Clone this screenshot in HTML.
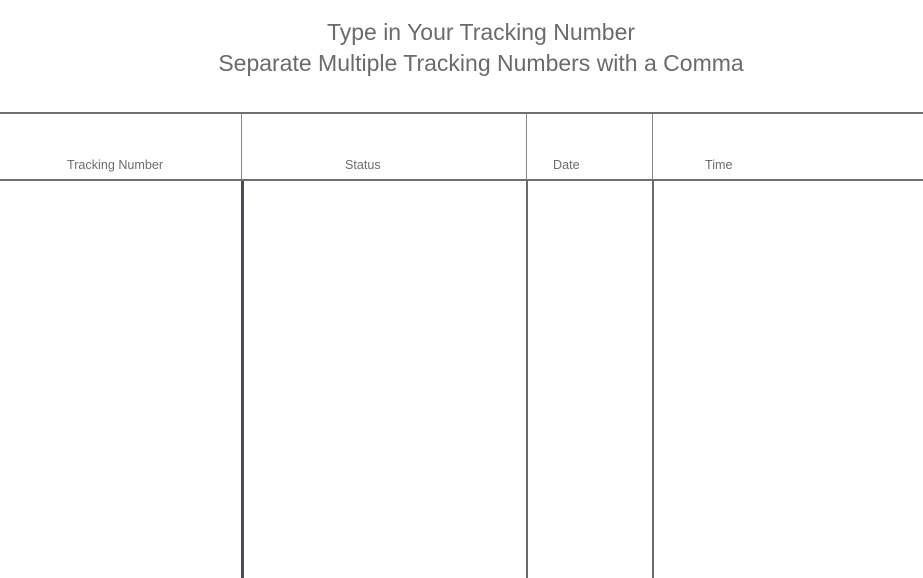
<!DOCTYPE html>
<html><head><style>
body{margin:0;width:923px;height:578px;background:#fff;position:relative;overflow:hidden;font-family:"Liberation Sans",sans-serif;color:#666}
.t{position:absolute;left:0;width:962px;text-align:center;font-size:23px;color:#6b6b6b}
.l{position:absolute;background:#707070}
.h{position:absolute;top:158px;font-size:12.6px;color:#6d6d6d}
</style></head><body>
<div class="t" style="top:19px">Type in Your Tracking Number</div>
<div class="t" style="top:50px">Separate Multiple Tracking Numbers with a Comma</div>
<div class="l" style="left:0;top:112px;width:923px;height:2px"></div>
<div class="l" style="left:0;top:179px;width:923px;height:2px"></div>
<div class="l" style="left:241px;top:114px;width:1px;height:65px;background:#888"></div>
<div class="l" style="left:526px;top:114px;width:1px;height:65px;background:#888"></div>
<div class="l" style="left:652px;top:114px;width:1px;height:65px;background:#888"></div>
<div class="l" style="left:241px;top:181px;width:3px;height:397px;background:#474c57"></div>
<div class="l" style="left:526px;top:181px;width:2px;height:397px;background:#6a6a6a"></div>
<div class="l" style="left:652px;top:181px;width:2px;height:397px;background:#6a6a6a"></div>
<div class="h" style="left:67px">Tracking Number</div>
<div class="h" style="left:345px">Status</div>
<div class="h" style="left:553px">Date</div>
<div class="h" style="left:705px">Time</div>
</body></html>
